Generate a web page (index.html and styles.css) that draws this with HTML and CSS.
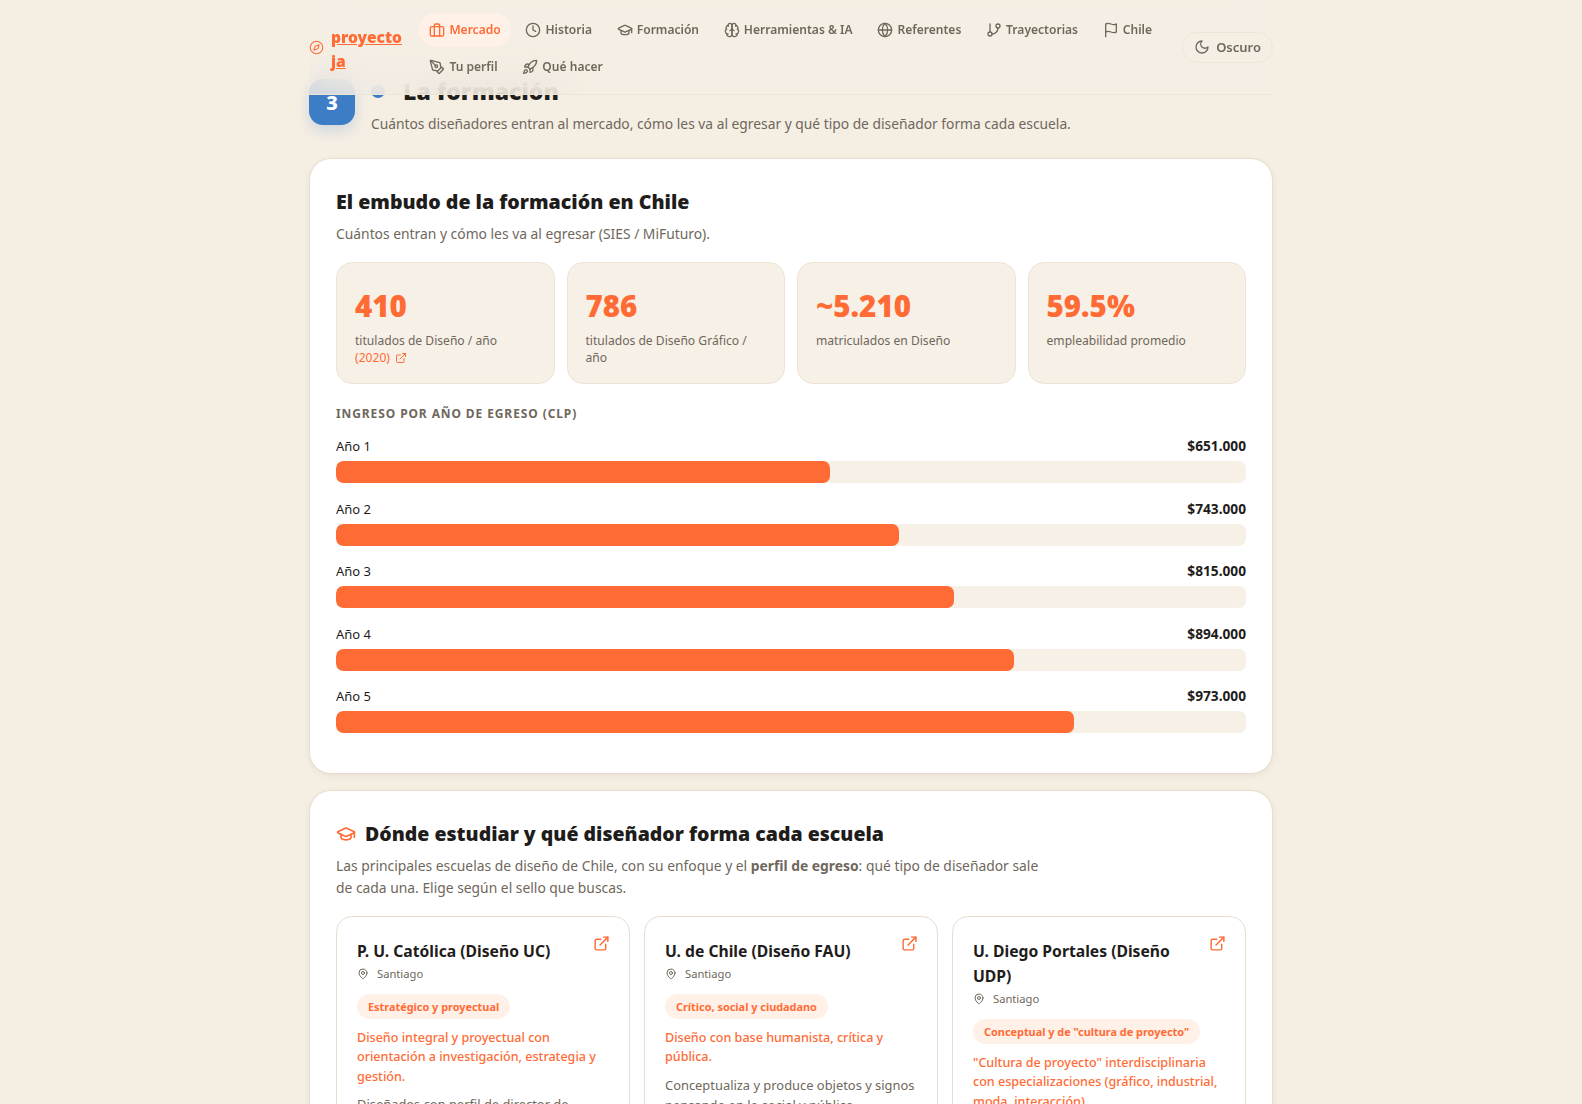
FILE: index.html
```html
<!DOCTYPE html>
<html lang="es">
<head>
  <meta charset="UTF-8" />
  <meta name="viewport" content="width=device-width, initial-scale=1.0" />
  <title>proyecto ja</title>
  <link rel="stylesheet" href="styles.css">
</head>
<body>
  <svg class="sprite" xmlns="http://www.w3.org/2000/svg">
    <symbol id="i-compass" viewBox="0 0 24 24"><circle cx="12" cy="12" r="10"/><polygon points="16.24 7.76 14.12 14.12 7.76 16.24 9.88 9.88 16.24 7.76"/></symbol>
    <symbol id="i-briefcase" viewBox="0 0 24 24"><rect x="2" y="7" width="20" height="14" rx="2"/><path d="M16 21V5a2 2 0 0 0-2-2h-4a2 2 0 0 0-2 2v16"/></symbol>
    <symbol id="i-clock" viewBox="0 0 24 24"><circle cx="12" cy="12" r="10"/><polyline points="12 6 12 12 16 14"/></symbol>
    <symbol id="i-cap" viewBox="0 0 24 24"><path d="M21.42 10.922a1 1 0 0 0-.019-1.838L12.83 5.18a2 2 0 0 0-1.66 0L2.6 9.08a1 1 0 0 0 0 1.832l8.57 3.908a2 2 0 0 0 1.66 0z"/><path d="M22 10v6"/><path d="M6 12.5V16a6 3 0 0 0 12 0v-3.5"/></symbol>
    <symbol id="i-brain" viewBox="0 0 24 24"><path d="M12 5a3 3 0 1 0-5.997.125 4 4 0 0 0-2.526 5.77 4 4 0 0 0 .556 6.588A4 4 0 1 0 12 18Z"/><path d="M12 5a3 3 0 1 1 5.997.125 4 4 0 0 1 2.526 5.77 4 4 0 0 1-.556 6.588A4 4 0 1 1 12 18Z"/><path d="M15 13a4.5 4.5 0 0 1-3-4 4.5 4.5 0 0 1-3 4"/><path d="M17.599 6.5a3 3 0 0 0 .399-1.375"/><path d="M6.003 5.125A3 3 0 0 0 6.401 6.5"/><path d="M3.477 10.896a4 4 0 0 1 .585-.396"/><path d="M19.938 10.5a4 4 0 0 1 .585.396"/><path d="M6 18a4 4 0 0 1-1.967-.516"/><path d="M19.967 17.484A4 4 0 0 1 18 18"/></symbol>
    <symbol id="i-globe" viewBox="0 0 24 24"><circle cx="12" cy="12" r="10"/><path d="M12 2a14.5 14.5 0 0 0 0 20 14.5 14.5 0 0 0 0-20"/><path d="M2 12h20"/></symbol>
    <symbol id="i-branch" viewBox="0 0 24 24"><line x1="6" y1="3" x2="6" y2="15"/><circle cx="18" cy="6" r="3"/><circle cx="6" cy="18" r="3"/><path d="M18 9a9 9 0 0 1-9 9"/></symbol>
    <symbol id="i-flag" viewBox="0 0 24 24"><path d="M4 15s1-1 4-1 5 2 8 2 4-1 4-1V3s-1 1-4 1-5-2-8-2-4 1-4 1z"/><line x1="4" y1="22" x2="4" y2="15"/></symbol>
    <symbol id="i-pen" viewBox="0 0 24 24"><path d="M15.707 21.293a1 1 0 0 1-1.414 0l-1.586-1.586a1 1 0 0 1 0-1.414l5.586-5.586a1 1 0 0 1 1.414 0l1.586 1.586a1 1 0 0 1 0 1.414z"/><path d="m18 13-1.375-6.874a1 1 0 0 0-.746-.776L3.235 2.028a1 1 0 0 0-1.207 1.207L5.35 15.879a1 1 0 0 0 .776.746L13 18"/><path d="m2.3 2.3 7.286 7.286"/><circle cx="11" cy="11" r="2"/></symbol>
    <symbol id="i-rocket" viewBox="0 0 24 24"><path d="M4.5 16.5c-1.5 1.26-2 5-2 5s3.74-.5 5-2c.71-.84.7-2.13-.09-2.91a2.18 2.18 0 0 0-2.91-.09z"/><path d="m12 15-3-3a22 22 0 0 1 2-3.95A12.88 12.88 0 0 1 22 2c0 2.72-.78 7.5-6 11a22.35 22.35 0 0 1-4 2z"/><path d="M9 12H4s.55-3.03 2-4c1.62-1.08 5 0 5 0"/><path d="M12 15v5s3.03-.55 4-2c1.08-1.62 0-5 0-5"/></symbol>
    <symbol id="i-moon" viewBox="0 0 24 24"><path d="M12 3a6 6 0 0 0 9 9 9 9 0 1 1-9-9Z"/></symbol>
    <symbol id="i-ext" viewBox="0 0 24 24"><path d="M18 13v6a2 2 0 0 1-2 2H5a2 2 0 0 1-2-2V8a2 2 0 0 1 2-2h6"/><polyline points="15 3 21 3 21 9"/><line x1="10" y1="14" x2="21" y2="3"/></symbol>
    <symbol id="i-pin" viewBox="0 0 24 24"><path d="M20 10c0 6-8 12-8 12s-8-6-8-12a8 8 0 0 1 16 0Z"/><circle cx="12" cy="10" r="3"/></symbol>
  </svg>

  <div class="page">
    <header class="topbar">
      <a href="#" class="brand">
        <svg class="icon brand-icon"><use href="#i-compass"/></svg>
        <span class="brand-name">proyecto ja</span>
      </a>
      <nav class="nav-links">
        <a href="#" class="nav-link active"><svg class="icon"><use href="#i-briefcase"/></svg>Mercado</a>
        <a href="#" class="nav-link"><svg class="icon"><use href="#i-clock"/></svg>Historia</a>
        <a href="#" class="nav-link"><svg class="icon"><use href="#i-cap"/></svg>Formación</a>
        <a href="#" class="nav-link"><svg class="icon"><use href="#i-brain"/></svg>Herramientas &amp; IA</a>
        <a href="#" class="nav-link"><svg class="icon"><use href="#i-globe"/></svg>Referentes</a>
        <a href="#" class="nav-link"><svg class="icon"><use href="#i-branch"/></svg>Trayectorias</a>
        <a href="#" class="nav-link"><svg class="icon"><use href="#i-flag"/></svg>Chile</a>
        <a href="#" class="nav-link"><svg class="icon"><use href="#i-pen"/></svg>Tu perfil</a>
        <a href="#" class="nav-link"><svg class="icon"><use href="#i-rocket"/></svg>Qué hacer</a>
      </nav>
      <button class="theme-toggle"><svg class="icon"><use href="#i-moon"/></svg>Oscuro</button>
    </header>

    <main>
      <section class="section-head">
        <div class="section-num">3</div>
        <div class="section-text">
          <h2 class="section-title"><span class="section-dot"></span>La formación</h2>
          <p class="section-sub">Cuántos diseñadores entran al mercado, cómo les va al egresar y qué tipo de diseñador forma cada escuela.</p>
        </div>
      </section>

      <section class="card">
        <h3 class="card-title">El embudo de la formación en Chile</h3>
        <p class="card-sub">Cuántos entran y cómo les va al egresar (SIES / MiFuturo).</p>

        <div class="stats">
          <div class="stat">
            <div class="stat-value">410</div>
            <div class="stat-label">titulados de Diseño / año <a href="#" class="stat-link">(2020) <svg class="icon"><use href="#i-ext"/></svg></a></div>
          </div>
          <div class="stat">
            <div class="stat-value">786</div>
            <div class="stat-label">titulados de Diseño Gráfico / año</div>
          </div>
          <div class="stat">
            <div class="stat-value">~5.210</div>
            <div class="stat-label">matriculados en Diseño</div>
          </div>
          <div class="stat">
            <div class="stat-value">59.5%</div>
            <div class="stat-label">empleabilidad promedio</div>
          </div>
        </div>

        <h4 class="bars-title">Ingreso por año de egreso (CLP)</h4>
        <div class="bars">
          <div class="bar-row">
            <div class="bar-head"><span>Año 1</span><strong>$651.000</strong></div>
            <div class="bar-track"><div class="bar-fill" style="width: 54.25%"></div></div>
          </div>
          <div class="bar-row">
            <div class="bar-head"><span>Año 2</span><strong>$743.000</strong></div>
            <div class="bar-track"><div class="bar-fill" style="width: 61.9%"></div></div>
          </div>
          <div class="bar-row">
            <div class="bar-head"><span>Año 3</span><strong>$815.000</strong></div>
            <div class="bar-track"><div class="bar-fill" style="width: 67.9%"></div></div>
          </div>
          <div class="bar-row">
            <div class="bar-head"><span>Año 4</span><strong>$894.000</strong></div>
            <div class="bar-track"><div class="bar-fill" style="width: 74.5%"></div></div>
          </div>
          <div class="bar-row">
            <div class="bar-head"><span>Año 5</span><strong>$973.000</strong></div>
            <div class="bar-track"><div class="bar-fill" style="width: 81.1%"></div></div>
          </div>
        </div>
      </section>

      <section class="card">
        <h3 class="card-title with-icon"><svg class="icon"><use href="#i-cap"/></svg>Dónde estudiar y qué diseñador forma cada escuela</h3>
        <p class="card-sub schools-sub">Las principales escuelas de diseño de Chile, con su enfoque y el <strong>perfil de egreso</strong>: qué tipo de diseñador sale de cada una. Elige según el sello que buscas.</p>

        <div class="schools">
          <article class="school">
            <div class="school-head">
              <h4 class="school-name">P. U. Católica (Diseño UC)</h4>
              <a href="#" class="school-link"><svg class="icon"><use href="#i-ext"/></svg></a>
            </div>
            <div class="school-city"><svg class="icon"><use href="#i-pin"/></svg>Santiago</div>
            <span class="school-tag">Estratégico y proyectual</span>
            <p class="school-focus">Diseño integral y proyectual con orientación a investigación, estrategia y gestión.</p>
            <p class="school-desc">Diseñados con perfil de director de proyectos y estrategia.</p>
          </article>
          <article class="school">
            <div class="school-head">
              <h4 class="school-name">U. de Chile (Diseño FAU)</h4>
              <a href="#" class="school-link"><svg class="icon"><use href="#i-ext"/></svg></a>
            </div>
            <div class="school-city"><svg class="icon"><use href="#i-pin"/></svg>Santiago</div>
            <span class="school-tag">Crítico, social y ciudadano</span>
            <p class="school-focus">Diseño con base humanista, crítica y pública.</p>
            <p class="school-desc">Conceptualiza y produce objetos y signos pensando en lo social y público.</p>
          </article>
          <article class="school">
            <div class="school-head">
              <h4 class="school-name">U. Diego Portales (Diseño UDP)</h4>
              <a href="#" class="school-link"><svg class="icon"><use href="#i-ext"/></svg></a>
            </div>
            <div class="school-city"><svg class="icon"><use href="#i-pin"/></svg>Santiago</div>
            <span class="school-tag">Conceptual y de "cultura de proyecto"</span>
            <p class="school-focus">"Cultura de proyecto" interdisciplinaria con especializaciones (gráfico, industrial, moda, interacción).</p>
          </article>
        </div>
      </section>
    </main>
  </div>
</body>
</html>
```

FILE: styles.css
```css
:root {
  --bg: #F5EEE3;
  --orange: #FF6B35;
  --orange-soft: #FFF0E8;
  --text-dark: #1F1D1B;
  --text-gray: #6F675C;
  --line: #EDE4D6;
  --line-strong: #E9DECE;
  --stat-bg: #F7F0E6;
  --blue: #3D7DC6;
}

html, body {
  height: 1104px;
  overflow: hidden;
}

body {
  margin: 0;
  font-family: 'Noto Sans', 'Open Sans', sans-serif;
  background-color: var(--bg);
  color: var(--text-dark);
}

.sprite {
  display: none;
}

.icon {
  width: 16px;
  height: 16px;
  fill: none;
  stroke: currentColor;
  stroke-width: 2;
  stroke-linecap: round;
  stroke-linejoin: round;
  flex-shrink: 0;
}

.page {
  position: relative;
  width: 964px;
  margin: 0 auto;
  padding-top: 79px;
}

/* top bar sits over the scrolled page */
.topbar {
  position: absolute;
  top: 0;
  left: 0;
  right: 0;
  height: 95px;
  z-index: 10;
  display: flex;
  align-items: center;
  gap: 10px;
  box-sizing: border-box;
  background: rgba(245, 238, 227, 0.8);
  backdrop-filter: blur(16px);
  border-bottom: 1px solid var(--line);
}

.brand {
  display: flex;
  align-items: center;
  gap: 7px;
  width: 100px;
  color: var(--orange);
  font-weight: 900;
  font-size: 15.5px;
  line-height: 24px;
  flex-shrink: 0;
}

.brand-icon {
  width: 15px;
  height: 15px;
  stroke-width: 1.75;
}

.brand-name {
  width: 75px;
  padding-top: 4px;
}

.nav-links {
  display: flex;
  flex-wrap: wrap;
  align-items: center;
  row-gap: 3px;
  column-gap: 4px;
  flex: 1;
  padding-top: 2px;
}

.nav-link {
  display: flex;
  align-items: center;
  gap: 4px;
  height: 34px;
  padding: 0 10.4px;
  border-radius: 17px;
  font-size: 12.05px;
  font-weight: 600;
  color: var(--text-gray);
  text-decoration: none;
}

.nav-link.active {
  background: var(--orange-soft);
  color: var(--orange);
}

.theme-toggle {
  display: flex;
  align-items: center;
  gap: 6px;
  height: 31px;
  padding: 0 11px;
  border: 1px solid var(--line);
  border-radius: 16px;
  background: transparent;
  font-family: inherit;
  font-size: 13px;
  font-weight: 600;
  color: var(--text-gray);
}

.section-head {
  display: flex;
  gap: 16px;
  margin-bottom: 23px;
}

.section-num {
  width: 46px;
  height: 46px;
  display: flex;
  align-items: center;
  justify-content: center;
  border-radius: 14px;
  background: var(--blue);
  color: white;
  font-size: 20px;
  font-weight: 800;
  box-shadow: 0 6px 14px rgba(61, 125, 198, 0.2);
}

.section-title {
  display: flex;
  align-items: center;
  gap: 18px;
  margin: 0;
  font-size: 23px;
  line-height: 24px;
  font-weight: 900;
}

.section-dot {
  width: 14px;
  height: 14px;
  border-radius: 50%;
  background: var(--blue);
}

.section-sub {
  margin: 10px 0 0;
  font-size: 13.8px;
  line-height: 22px;
  color: var(--text-gray);
}

.card {
  background: white;
  border: 1px solid var(--line-strong);
  border-radius: 22px;
  padding: 28px 26px 26px;
  margin-bottom: 16px;
  box-shadow: 0 2px 6px rgba(80, 60, 30, 0.07);
}

.card-title {
  margin: 0;
  font-size: 19.6px;
  line-height: 30px;
  font-weight: 900;
}

.card-title.with-icon {
  display: flex;
  align-items: center;
  gap: 9px;
  font-size: 19.5px;
}

.card-title .icon {
  width: 20px;
  height: 20px;
  color: var(--orange);
}

.card-sub {
  margin: 6px 0 0;
  font-size: 13.85px;
  line-height: 22px;
  color: var(--text-gray);
}

.schools-sub {
  max-width: 720px;
}

.stats {
  display: grid;
  grid-template-columns: repeat(4, 1fr);
  gap: 12px;
  margin-top: 17px;
}

.stat {
  box-sizing: border-box;
  height: 122px;
  padding: 25px 18px 0;
  background: var(--stat-bg);
  border: 1px solid var(--line);
  border-radius: 16px;
}

.stat-value {
  font-size: 29.5px;
  line-height: 36px;
  font-weight: 900;
  color: var(--orange);
}

.stat-label {
  margin-top: 8px;
  font-size: 12.1px;
  line-height: 17px;
  color: var(--text-gray);
}

.stat-link {
  display: flex;
  align-items: center;
  gap: 5px;
  color: var(--orange);
  text-decoration: none;
}

.stat-link .icon {
  width: 12px;
  height: 12px;
}

.bars-title {
  margin: 22px 0 0;
  font-size: 12px;
  line-height: 16px;
  font-weight: 700;
  letter-spacing: 0.075em;
  text-transform: uppercase;
  color: var(--text-gray);
}

.bars {
  display: flex;
  flex-direction: column;
  gap: 15.5px;
  margin-top: 14px;
  padding-bottom: 13.6px;
}

.bar-head {
  display: flex;
  justify-content: space-between;
  font-size: 13px;
  line-height: 20px;
  margin-bottom: 5px;
}

.bar-head strong {
  font-size: 13.7px;
}

.bar-track {
  height: 22px;
  background: var(--stat-bg);
  border-radius: 7px;
  overflow: hidden;
}

.bar-fill {
  height: 100%;
  background: var(--orange);
  border-radius: 7px;
}

.schools {
  display: grid;
  grid-template-columns: repeat(3, 1fr);
  gap: 14px;
  margin-top: 17px;
}

.school {
  padding: 22px 20px 20px;
  border: 1px solid var(--line-strong);
  border-radius: 16px;
}

.school-head {
  display: flex;
  justify-content: space-between;
  gap: 12px;
}

.school-name {
  margin: 0;
  font-size: 15.7px;
  line-height: 25px;
  font-weight: 700;
}

.school-link {
  margin: -4px -1px 0 0;
  color: var(--orange);
}

.school-link .icon {
  width: 17px;
  height: 17px;
}

.school-city {
  display: flex;
  align-items: center;
  gap: 8px;
  margin-top: -1px;
  font-size: 11.2px;
  line-height: 22px;
  color: var(--text-gray);
}

.school-city .icon {
  width: 12px;
  height: 12px;
}

.school-tag {
  display: inline-block;
  margin-top: 9px;
  padding: 0 11px;
  line-height: 25px;
  border-radius: 13px;
  background: var(--orange-soft);
  color: var(--orange);
  font-size: 10.9px;
  font-weight: 700;
}

.school-focus {
  margin: 9px 0 0;
  font-size: 12.55px;
  line-height: 19.5px;
  font-weight: 500;
  color: var(--orange);
}

.school-desc {
  margin: 8px 0 0;
  font-size: 12.9px;
  line-height: 20px;
  color: var(--text-gray);
}
```
